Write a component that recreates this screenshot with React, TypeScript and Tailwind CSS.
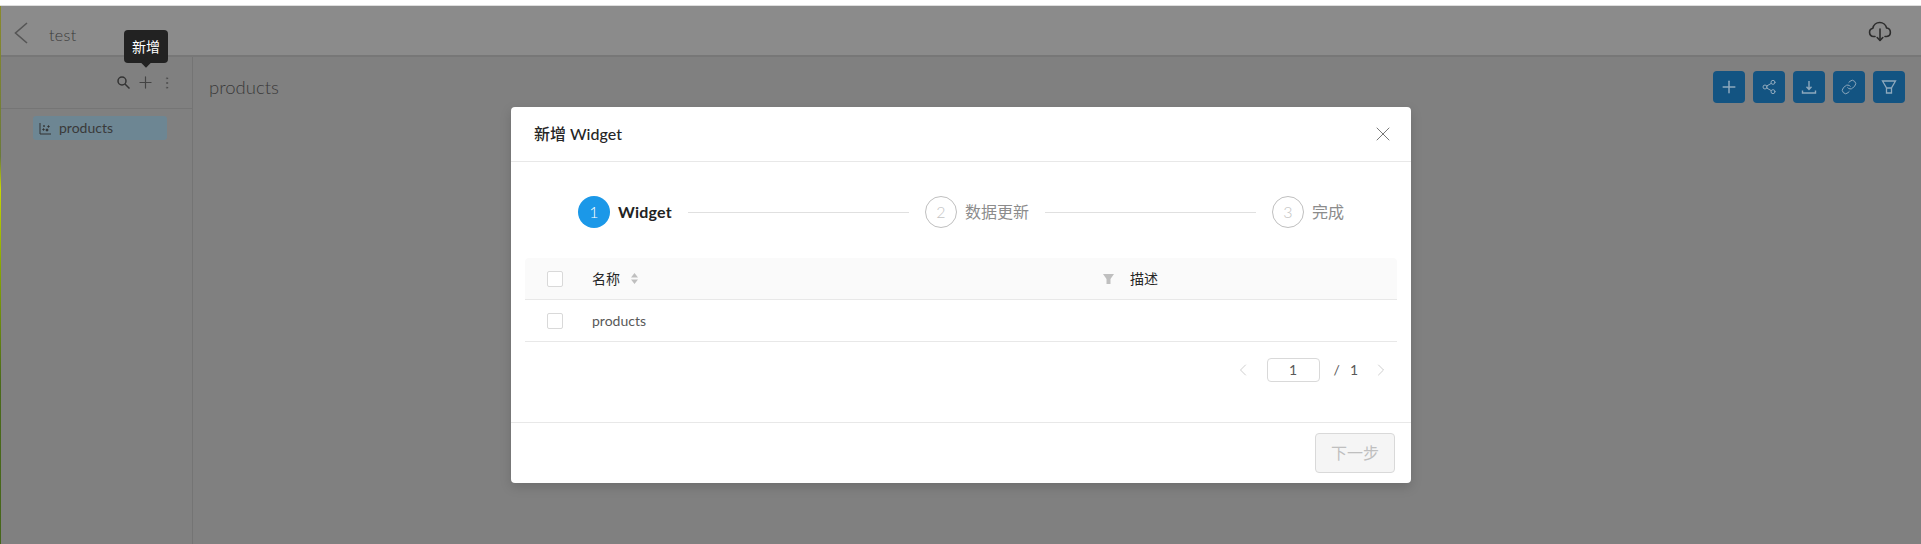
import React from "react";
import { ChevronLeft, ChevronRight, Plus, Share2, Link, X, EllipsisVertical } from "lucide-react";

const sans = 'font-["Lato","Noto_Sans_CJK_SC",sans-serif]';

function Step({ n, label, active, last }: { n: number; label: string; active?: boolean; last?: boolean }) {
  return (
    <div className={last ? "flex items-start shrink-0" : "flex items-start flex-1"}>
      <div
        className={
          active
            ? "w-8 h-8 shrink-0 rounded-full bg-[#1b98e8] text-white flex items-center justify-center text-base font-light"
            : "w-8 h-8 shrink-0 rounded-full border border-[#bfbfbf] text-[#c4c4c4] flex items-center justify-center text-base font-light"
        }
      >
        {n}
      </div>
      <span className={active ? "ml-2 leading-8 text-base font-bold tracking-[0.2px] text-[#222]" : "ml-2 leading-8 text-base text-[#8c8c8c]"}>{label}</span>
      {!last && <div className="flex-1 h-px mt-4 ml-4 mr-4 bg-[#e0e0e0]" />}
    </div>
  );
}

function Box() {
  return <div className="w-4 h-4 rounded-[2px] border border-[#d9d9d9] bg-white" />;
}

function ActionBtn({ children }: { children: React.ReactNode }) {
  return <div className="w-8 h-8 rounded-[4px] bg-[#135482] text-[#8fa9bd] flex items-center justify-center">{children}</div>;
}

export default function App() {
  return (
    <div className={`relative w-[1921px] h-[544px] overflow-hidden bg-[#808080] flex flex-col ${sans}`}>
      <div className="h-[6px] bg-white border-b border-[#dedede] shrink-0" />
      <div className="absolute left-0 top-[6px] bottom-0 w-px bg-[linear-gradient(to_bottom,#8a8a2a_0%,#6b7a3a_28%,#c8d800_34%,#8aa800_48%,#4a6a1a_70%,#46661a_100%)]" />

      <header className="h-[51px] shrink-0 bg-[#8b8b8b] border-b-2 border-[#777] flex items-center pl-[14px] pr-[29px]">
        <svg width="14" height="22" viewBox="0 0 14 22" fill="none" stroke="#555" strokeWidth="1.6" className="mt-[4px]">
          <path d="M13 1 1.5 11 13 21" />
        </svg>
        <span className="ml-[21px] mt-[8px] text-base text-[#3a3a3a] font-light tracking-wide">test</span>
        <div className="ml-auto mt-[3px]">
          <svg width="24" height="22" viewBox="0 0 24 22" fill="none" stroke="#2c2c2c" strokeWidth="1.6" strokeLinecap="round" strokeLinejoin="round">
            <path d="M7 15.5H5.5a4.2 4.2 0 0 1-.6-8.3A7 7 0 0 1 18.6 7a4.3 4.3 0 0 1 .2 8.5H17" />
            <path d="M12 8v11" />
            <path d="M9.2 16.5 12 19.5l2.8-3" />
          </svg>
        </div>
      </header>

      <div className="flex flex-1 min-h-0">
        <aside className="w-[193px] shrink-0 border-r border-[#747474] flex flex-col">
          <div className="h-[52px] border-b border-[#757575] flex items-center justify-end pr-[17px] shrink-0">
            <svg width="13" height="13" viewBox="0 0 13 13" fill="none" stroke="#333" strokeWidth="1.5">
              <circle cx="5" cy="5" r="4" />
              <path d="M8 8l4.5 4.5" />
            </svg>
            <Plus size={19} strokeWidth={1.5} className="ml-[6px] text-[#444]" />
            <EllipsisVertical size={16} strokeWidth={1.1} className="ml-[4px] text-[#4a4a4a]" />
          </div>
          <div className="pl-[33px] pt-[7px] pr-[25px]">
            <div className="h-6 rounded-[3px] bg-[#6d8693] flex items-center pl-[6px] gap-[7px] text-[14px] text-[#3a3a3a]">
              <svg width="13" height="13" viewBox="0 0 13 13" fill="none" stroke="#333" strokeWidth="1">
                <path d="M1 1v11h11" />
                <circle cx="4.5" cy="7.5" r=".7" fill="#333" />
                <circle cx="8" cy="8" r="1" fill="#333" />
                <circle cx="9.5" cy="4.5" r=".7" fill="#333" />
                <circle cx="5" cy="4" r=".5" fill="#333" />
              </svg>
              <span className="-mt-[2px]">products</span>
            </div>
          </div>
        </aside>
        <main className="flex-1 flex items-start justify-between pl-[16px] pr-[16px] pt-[14px]">
          <h1 className="text-[18.5px] font-light text-[#3a3a3a] leading-[32px]">products</h1>
          <div className="flex gap-2">
            <ActionBtn><Plus size={20} strokeWidth={1.8} /></ActionBtn>
            <ActionBtn><Share2 size={16} strokeWidth={1.5} /></ActionBtn>
            <ActionBtn>
              <svg width="16" height="16" viewBox="0 0 16 16" fill="none" stroke="currentColor" strokeWidth="1.4">
                <path d="M8 2v8M5.5 7.8 8 10.4l2.5-2.6M1.5 11.5v2.5h13v-2.5" />
              </svg>
            </ActionBtn>
            <ActionBtn><Link size={16} strokeWidth={1.5} /></ActionBtn>
            <ActionBtn>
              <svg width="16" height="16" viewBox="0 0 16 16" fill="none" stroke="currentColor" strokeWidth="1.3">
                <path d="M1.5 2h13L10.5 9v5h-5V9zM5.5 9h5" />
              </svg>
            </ActionBtn>
          </div>
        </main>
      </div>

      {/* tooltip */}
      <div className="absolute left-[124px] top-[30px] w-11 h-[33px] rounded-[4px] bg-[#222] text-white text-sm flex items-center justify-center">
        新增
        <div className="absolute left-1/2 -bottom-[3px] -ml-[4px] w-2 h-2 rotate-45 bg-[#222]" />
      </div>

      {/* modal */}
      <div className="absolute left-[511px] top-[107px] w-[900px] h-[376px] bg-white rounded-[4px] shadow-[0_4px_12px_rgba(0,0,0,0.15)] flex flex-col">
        <div className="h-[55px] shrink-0 border-b border-[#e8e8e8] flex items-center justify-between pl-[23px] pr-[16px]">
          <span className="text-base font-medium text-[#262626]">新增 Widget</span>
          <X size={24} strokeWidth={1} className="text-[#777]" />
        </div>
        <div className="flex-1 px-[14px] flex flex-col">
          <div className="flex items-start pt-[34px] pl-[53px] pr-[53px]">
            <Step n={1} label="Widget" active />
            <Step n={2} label="数据更新" />
            <Step n={3} label="完成" last />
          </div>
          <div className="mt-[30px] h-[42px] bg-[#fafafa] border-b border-[#e8e8e8] rounded-t-[4px] flex items-center text-sm text-[#262626]">
            <div className="w-[67px] pl-[22px]"><Box /></div>
            <div className="w-[538px] flex items-center gap-[10px]">
              名称
              <svg width="9" height="13" viewBox="0 0 9 13" fill="#bfbfbf">
                <path d="M4.5 1 8 5.5H1zM4.5 12 1 7.5h7z" />
              </svg>
              <svg className="ml-auto mr-[16px]" width="11" height="10" viewBox="0 0 11 10" fill="#bfbfbf">
                <path d="M0 0h11L7.5 5v5h-4V5z" />
              </svg>
            </div>
            <span>描述</span>
          </div>
          <div className="h-[42px] border-b border-[#e8e8e8] flex items-center text-sm text-[#595959]">
            <div className="w-[67px] pl-[22px]"><Box /></div>
            <span className="mt-[1px]">products</span>
          </div>
          <div className="flex items-center justify-end h-[56px] pr-[6px] text-sm text-[#595959]">
            <ChevronLeft size={20} strokeWidth={1} className="text-[#c4c4c4]" />
            <div className="ml-[14px] w-[53px] h-6 rounded-[4px] border border-[#d9d9d9] flex items-center justify-center">1</div>
            <span className="ml-[14px]">/</span>
            <span className="ml-[10px]">1</span>
            <ChevronRight size={20} strokeWidth={1} className="ml-[13px] text-[#c4c4c4]" />
          </div>
        </div>
        <div className="h-[61px] shrink-0 border-t border-[#e8e8e8] flex items-center justify-end pr-[16px]">
          <div className="w-20 h-10 rounded-[4px] border border-[#d9d9d9] bg-[#f5f5f5] text-[#bfbfbf] text-base flex items-center justify-center">
            下一步
          </div>
        </div>
      </div>
    </div>
  );
}
